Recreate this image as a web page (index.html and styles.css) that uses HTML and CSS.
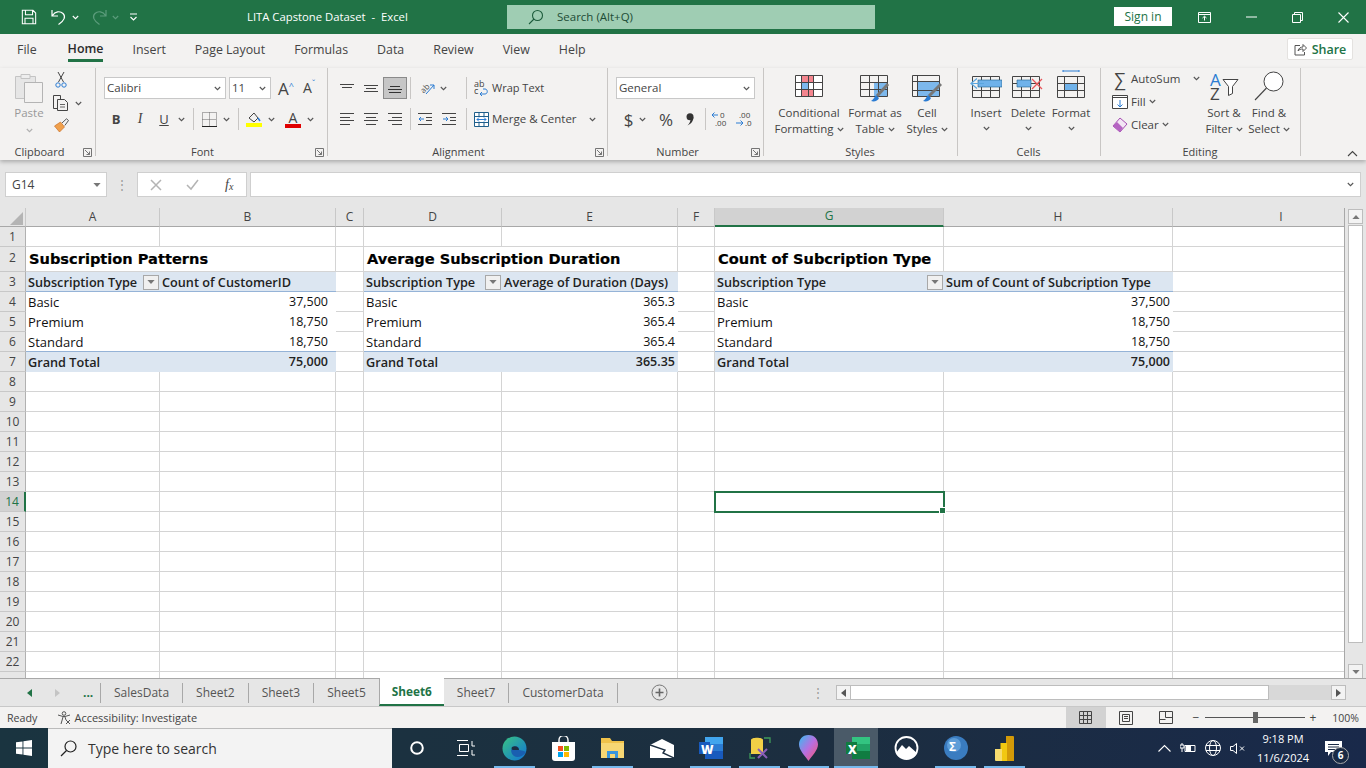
FILE: index.html
```html
<!DOCTYPE html>
<html>

<head>
	<meta charset="UTF-8">
	<title>LITA Capstone Dataset - Excel</title>
	<link rel="stylesheet" href="styles.css">
</head>

<body>
	<svg class="sprite">
		<symbol id="chev" viewBox="0 0 7 5"><path d="M.8 1l2.7 2.7L6.2 1" fill="none" stroke="currentColor" stroke-width="1.1"/></symbol>
		<symbol id="launch" viewBox="0 0 9 9"><path d="M.5.5h8v8h-8z M2 2l4.5 4.5M3.5 6.5h3v-3" fill="none" stroke="#666" stroke-width=".9"/></symbol>
		<symbol id="caret" viewBox="0 0 9 5"><path d="M0 0h9L4.500 5z" fill="currentColor"/></symbol>
	</svg>

	<!-- title bar -->
	<header class="titlebar">
		<div class="qat">
			<svg class="qat-save" width="16" height="16" viewBox="0 0 18 18"><path d="M1.500 1.500h12l3 3v12h-15z M5 1.500v5h8v-5 M4.500 16.500v-6h9v6" fill="none" stroke="#fff" stroke-width="1.200"/></svg>
			<svg class="qat-undo" width="16" height="18" viewBox="0 0 16 18"><path d="M1 2v6h6M1.500 7.500C4 3.500 9 2.500 12 5.500c3 3 1.500 7-4.500 11" fill="none" stroke="#fff" stroke-width="1.200"/></svg>
			<svg class="chev-w"><use href="#chev"/></svg>
			<svg class="qat-redo" width="16" height="18" viewBox="0 0 16 18"><path d="M15 2v6H9M14.500 7.500C12 3.500 7 2.500 4 5.500c-3 3-1.500 7 4.500 11" fill="none" stroke="#5c9c7c" stroke-width="1.200"/></svg>
			<svg class="chev-w faded"><use href="#chev"/></svg>
			<svg class="qat-more" width="9" height="9" viewBox="0 0 9 9"><path d="M1 1h7M1.500 4l3 3 3-3" fill="none" stroke="#fff" stroke-width="1.100"/></svg>
		</div>
		<div class="doc-title">LITA Capstone Dataset &nbsp;-&nbsp; Excel</div>
		<div class="searchbox">
			<svg width="16" height="16" viewBox="0 0 16 16"><circle cx="9.500" cy="6.500" r="5" fill="none" stroke="#1d5c3c" stroke-width="1.100"/><path d="M6 10l-5 5" stroke="#1d5c3c" stroke-width="1.100"/></svg>
			<span>Search (Alt+Q)</span>
		</div>
		<div class="spacer"></div>
		<button class="signin">Sign in</button>
		<div class="winbtn"><svg width="14" height="11" viewBox="0 0 14 11"><path d="M.5.500h12v10H.500zM.5 2.500h12M6.500 8.500V4.500M4.500 6l2-1.800 2 1.800" fill="none" stroke="#fff"/></svg></div>
		<div class="winbtn"><svg width="11" height="2" viewBox="0 0 11 2"><path d="M0 1h11" stroke="#fff"/></svg></div>
		<div class="winbtn"><svg width="11" height="11" viewBox="0 0 11 11"><path d="M.5 2.500h8v8h-8zM2.500 2.500v-2h8v8h-2" fill="none" stroke="#fff"/></svg></div>
		<div class="winbtn"><svg width="11" height="11" viewBox="0 0 11 11"><path d="M.5.500l10 10M10.500.500l-10 10" stroke="#fff" stroke-width="1.100"/></svg></div>
	</header>

	<!-- menu tabs -->
	<nav class="menutabs">
		<span class="menu-file">File</span>
		<span class="menu-on">Home</span>
		<span>Insert</span>
		<span>Page Layout</span>
		<span>Formulas</span>
		<span>Data</span>
		<span>Review</span>
		<span>View</span>
		<span>Help</span>
		<div class="spacer"></div>
		<button class="share">
			<svg width="13" height="13" viewBox="0 0 13 13"><path d="M6 2.500H1v9.500h9.500V9M4 8c.5-3 3-4 5-4V1.500L12.500 5 9 8.500V6C7 6 5 6.500 4 8z" fill="none" stroke="#555"/></svg>
			Share
		</button>
	</nav>

	<!-- ribbon -->
	<section class="ribbon">
		<div class="group g-clip">
			<div class="group-body clip-body">
				<div class="paste">
					<svg width="28" height="31" viewBox="0 0 28 31"><path d="M.5 4.500h20v22H.500z" fill="#e6e6e6" stroke="#c4c4c4"/><path d="M6 2.500h9v4H6z" fill="#eee" stroke="#c4c4c4"/><path d="M9.500 10.500h18v20h-18z" fill="#f3f2f1" stroke="#b4b4b4"/></svg>
					<span class="paste-label">Paste</span>
					<svg class="chev dim"><use href="#chev"/></svg>
				</div>
				<div class="clip-tools">
					<svg class="scissors" width="12" height="16" viewBox="0 0 12 16"><path d="M3 0l5.500 10M9 0L3.500 10" stroke="#444" fill="none"/><circle cx="3" cy="13" r="2.200" fill="none" stroke="#2b7cd3"/><circle cx="9" cy="13" r="2.200" fill="none" stroke="#2b7cd3"/></svg>
					<div class="copy-row">
						<svg width="16" height="16" viewBox="0 0 16 16"><path d="M.5.500h7v13h-7z" fill="none" stroke="#444"/><path d="M4.500 4.500h7l3 3v8h-10z" fill="#f3f2f1" stroke="#444"/><path d="M7 9.500h5M7 12h5" stroke="#666"/></svg>
						<svg class="chev"><use href="#chev"/></svg>
					</div>
					<svg width="17" height="15" viewBox="0 0 16 15"><path d="M1 8l6-4 4 5-5 5z" fill="#f0a04b" stroke="#c8702a" stroke-width=".7"/><path d="M8.500 5L13 .8l2 1.700-3.700 5" fill="none" stroke="#555"/></svg>
				</div>
			</div>
			<div class="group-label">Clipboard<svg class="launch"><use href="#launch"/></svg></div>
		</div>

		<div class="group g-font">
			<div class="group-body">
				<div class="row row-top">
					<div class="combo combo-font"><span>Calibri</span><svg class="chev"><use href="#chev"/></svg></div>
					<div class="combo combo-size"><span>11</span><svg class="chev"><use href="#chev"/></svg></div>
					<span class="grow-a">A<sup>^</sup></span>
					<span class="shrink-a">A<sup>ˇ</sup></span>
				</div>
				<div class="row row-low">
					<span class="btn bold">B</span>
					<span class="btn ital">I</span>
					<span class="btn under">U</span>
					<svg class="chev tight"><use href="#chev"/></svg>
					<i class="vsep"></i>
					<span class="btn"><svg width="15" height="15" viewBox="0 0 15 15"><path d="M.5.500h14v14H.500zM7.500.500v14M.5 7.500h14" fill="none" stroke="#666" stroke-dasharray="1 1"/><path d="M0 14.500h15" stroke="#222"/></svg></span>
					<svg class="chev tight"><use href="#chev"/></svg>
					<i class="vsep"></i>
					<span class="btn"><svg width="16" height="16" viewBox="0 0 16 16"><path d="M3 7l5-5 4 5-4 4z" fill="none" stroke="#444"/><path d="M12 7l2 3" stroke="#2b7cd3" stroke-width="1.500"/><path d="M0 12h16v4H0z" fill="#ffff00"/></svg></span>
					<svg class="chev tight"><use href="#chev"/></svg>
					<span class="btn font-a"><b>A</b></span>
					<svg class="chev tight"><use href="#chev"/></svg>
				</div>
			</div>
			<div class="group-label">Font<svg class="launch"><use href="#launch"/></svg></div>
		</div>

		<div class="group g-align">
			<div class="group-body">
				<div class="row row-top">
					<span class="btn"><svg width="14" height="9" viewBox="0 0 14 9"><path d="M0 .5h14M2 3.500h10" stroke="#444"/></svg></span>
					<span class="btn"><svg width="14" height="9" viewBox="0 0 14 9"><path d="M0 1.500h14M2 4.500h10M0 7.500h14" stroke="#444"/></svg></span>
					<span class="btn btn-on"><svg width="14" height="9" viewBox="0 0 14 9"><path d="M2 2.500h10M0 5.500h14M1 8.500h12" stroke="#333"/></svg></span>
					<i class="vsep"></i>
					<span class="btn"><svg width="16" height="16" viewBox="0 0 16 16"><text x="0" y="11" transform="rotate(-45 5 8)" class="orient-txt">ab</text><path d="M6 14l8-9M10 5h4v4" fill="none" stroke="#2b7cd3"/></svg></span>
					<svg class="chev"><use href="#chev"/></svg>
					<i class="vsep sep-wide"></i>
					<span class="wide-btn wrap-btn"><svg width="15" height="16" viewBox="0 0 15 16"><text x="0" y="7" class="wrap-txt">ab</text><text x="0" y="14" class="wrap-txt">c</text><path d="M9 9h2c3 0 3 5 0 5H6M8 16l-2-2 2-2" fill="none" stroke="#2b7cd3"/></svg><span>Wrap Text</span></span>
				</div>
				<div class="row row-low">
					<span class="btn"><svg width="14" height="12" viewBox="0 0 14 12"><path d="M0 .5h14M0 4.500h10M0 7.500h14M0 11.500h10" stroke="#444"/></svg></span>
					<span class="btn"><svg width="14" height="12" viewBox="0 0 14 12"><path d="M0 .5h14M2 4.500h10M0 7.500h14M2 11.500h10" stroke="#444"/></svg></span>
					<span class="btn"><svg width="14" height="12" viewBox="0 0 14 12"><path d="M0 .5h14M4 4.500h10M0 7.500h14M4 11.500h10" stroke="#444"/></svg></span>
					<i class="vsep sep-low"></i>
					<span class="btn"><svg width="14" height="12" viewBox="0 0 14 12"><path d="M0 .5h14M8 4.500h6M8 7.500h6M0 11.500h14" stroke="#444"/><path d="M1 6h5M3 4L1 6l2 2" fill="none" stroke="#2b7cd3"/></svg></span>
					<span class="btn"><svg width="14" height="12" viewBox="0 0 14 12"><path d="M0 .5h14M8 4.500h6M8 7.500h6M0 11.500h14" stroke="#444"/><path d="M1 6h5M4 4l2 2-2 2" fill="none" stroke="#2b7cd3"/></svg></span>
					<i class="vsep sep-merge"></i>
					<span class="wide-btn"><svg width="15" height="15" viewBox="0 0 15 15"><path d="M.5.500h14v14H.500zM.5 4.500h14M.5 10.500h14M5 .5v4M10 .5v4M5 10.500v4M10 10.500v4" fill="#fff" stroke="#1f5f8b"/><path d="M3 7.500h9M5 5.500l-2 2 2 2M10 5.500l2 2-2 2" fill="none" stroke="#2b7cd3"/></svg><span>Merge &amp; Center</span><svg class="chev merge-chev"><use href="#chev"/></svg></span>
				</div>
			</div>
			<div class="group-label">Alignment<svg class="launch"><use href="#launch"/></svg></div>
		</div>

		<div class="group g-number">
			<div class="group-body">
				<div class="row row-top">
					<div class="combo combo-num"><span>General</span><svg class="chev"><use href="#chev"/></svg></div>
				</div>
				<div class="row row-low num-row">
					<span class="sym-dollar">$</span>
					<svg class="chev tight"><use href="#chev"/></svg>
					<span class="sym-pct">%</span>
					<span class="sym-comma"><svg width="8" height="13" viewBox="0 0 8 13"><circle cx="4" cy="3.800" r="3.500" fill="#333"/><path d="M7.500 4C7.500 8 5 11 1.500 12.500 4 10 4.500 8 4.500 6z" fill="#333"/></svg></span>
					<i class="vsep"></i>
					<span class="dec"><svg width="18" height="18" viewBox="0 0 18 18"><path d="M7 5H1M3.500 2.500L1 5l2.500 2.500" fill="none" stroke="#2b7cd3"/><text x="9" y="8" class="dec-txt">0</text><text x="4" y="16" class="dec-txt">.00</text></svg></span>
					<span class="dec"><svg width="18" height="18" viewBox="0 0 18 18"><text x="4" y="8" class="dec-txt">.00</text><path d="M1 13h7M5.500 10.500L8 13l-2.500 2.500" fill="none" stroke="#2b7cd3"/><text x="10" y="16" class="dec-txt">.0</text></svg></span>
				</div>
			</div>
			<div class="group-label">Number<svg class="launch"><use href="#launch"/></svg></div>
		</div>

		<div class="group g-styles">
			<div class="group-body big-row">
				<div class="big big-cond">
					<svg width="28" height="22" viewBox="0 0 28 22"><path d="M.5.500h27v21H.500z" fill="#fff"/><path d="M6 1h12v7H6zM6 15h12v6H6z" fill="#f4858e"/><path d="M6 8h7v7H6z" fill="#7db8ec"/><path d="M.5.500h27v21H.500zM.5 7.500h27M.5 14.500h27M6.500.500v21M13.500.500v21M18.500.500v21" fill="none" stroke="#444"/></svg>
					<span>Conditional</span><span>Formatting<svg class="chev inline"><use href="#chev"/></svg></span>
				</div>
				<div class="big big-fmt">
					<svg width="30" height="28" viewBox="0 0 30 28"><path d="M14 8h13v13H14z" fill="#7db8ec"/><path d="M.5.500h27v21H.500zM.5 7.500h27M.5 14.500h27M9.500.500v21M18.500.500v21" fill="none" stroke="#444"/><path d="M28 9L17 21" stroke="#777" stroke-width="3"/><path d="M16 20l3 3c-1 3-5 4-8 3 2-1 3-3 5-6z" fill="#2b7cd3"/></svg>
					<span>Format as</span><span>Table<svg class="chev inline"><use href="#chev"/></svg></span>
				</div>
				<div class="big big-cell">
					<svg width="30" height="28" viewBox="0 0 30 28"><path d="M5 7h22v14H5z" fill="#7db8ec"/><path d="M.5.500h27v21H.500zM.5 6.500h27M.5 15.500h27M5.500.500v21" fill="none" stroke="#444"/><path d="M29 9L17 21" stroke="#777" stroke-width="3"/><path d="M16 20l3 3c-1 3-5 4-8 3 2-1 3-3 5-6z" fill="#2b7cd3"/></svg>
					<span>Cell</span><span>Styles<svg class="chev inline"><use href="#chev"/></svg></span>
				</div>
			</div>
			<div class="group-label">Styles</div>
		</div>

		<div class="group g-cells">
			<div class="group-body big-row">
				<div class="big big-ins">
					<svg width="32" height="28" viewBox="0 0 32 28"><path d="M2.500 6.500h27v21h-27zM2.500 13.500h27M2.500 20.500h27M11.500 6.500v21M20.500 6.500v21" fill="none" stroke="#444"/><path d="M8 10h24v7H8z" fill="#6fb2ea" stroke="#1f5f8b" stroke-width=".6"/><path d="M14 13.500H2M7 8.500l-6 5 6 5" fill="#f3f2f1" stroke="#5aa6df" stroke-width="1.200"/></svg>
					<span>Insert</span><svg class="chev"><use href="#chev"/></svg>
				</div>
				<div class="big big-del">
					<svg width="32" height="28" viewBox="0 0 32 28"><path d="M.5 6.500h27v21H.500zM.5 13.500h27M.5 20.500h27M9.500 6.500v21M18.500 6.500v21" fill="none" stroke="#444"/><path d="M5 10h14v7H5z" fill="#6fb2ea" stroke="#1f5f8b" stroke-width=".6"/><path d="M20 9l10 10M30 9L20 19" stroke="#e8555a" stroke-width="1.300"/></svg>
					<span>Delete</span><svg class="chev"><use href="#chev"/></svg>
				</div>
				<div class="big big-format">
					<svg width="28" height="28" viewBox="0 0 28 28"><path d="M6 1h16M6 0v2M22 0v2" stroke="#2b7cd3"/><path d="M.5 6.500h27v21H.500zM.5 13.500h27M.5 20.500h27M7.500 6.500v21M20.500 6.500v21" fill="none" stroke="#444"/><path d="M8 14h12v6H8z" fill="#6fb2ea"/></svg>
					<span>Format</span><svg class="chev"><use href="#chev"/></svg>
				</div>
			</div>
			<div class="group-label">Cells</div>
		</div>

		<div class="group g-edit">
			<div class="group-body edit-body">
				<div class="edit-list">
					<div class="edit-item"><span class="sigma">∑</span>AutoSum<svg class="chev auto-chev"><use href="#chev"/></svg></div>
					<div class="edit-item"><svg width="16" height="14" viewBox="0 0 16 14"><path d="M.5.500h15v13H.500zM.5 2.500h15" fill="#fff" stroke="#444"/><path d="M8 5v7M5.500 9.500L8 12l2.500-2.500" fill="none" stroke="#2b7cd3"/></svg>Fill<svg class="chev inline"><use href="#chev"/></svg></div>
					<div class="edit-item"><svg width="16" height="16" viewBox="0 0 16 16"><path d="M1 9l7-8 7 6-7 8z" fill="#f3e6f5" stroke="#a64db3"/><path d="M1 9l4-4 6 6-3 4z" fill="#b565c2"/></svg>Clear<svg class="chev inline"><use href="#chev"/></svg></div>
				</div>
				<div class="big big-sort">
					<svg width="30" height="31" viewBox="0 0 30 31"><text x="1" y="15" class="az az-a">A</text><text x="1" y="29" class="az">Z</text><path d="M14 8.500h15l-5.500 7v7l-4 2v-9z" fill="#fff" stroke="#444"/></svg>
					<span>Sort &amp;</span><span>Filter<svg class="chev inline"><use href="#chev"/></svg></span>
				</div>
				<div class="big big-find">
					<svg width="30" height="30" viewBox="0 0 30 30"><circle cx="19.500" cy="10.500" r="9.500" fill="#fff" stroke="#444"/><path d="M12.500 17L1 29" stroke="#444" stroke-width="1.100"/></svg>
					<span>Find &amp;</span><span>Select<svg class="chev inline"><use href="#chev"/></svg></span>
				</div>
			</div>
			<div class="group-label">Editing</div>
		</div>

		<div class="collapse-btn"><svg width="11" height="7" viewBox="0 0 11 7"><path d="M1 6l4.500-4.500L10 6" fill="none" stroke="#444" stroke-width="1.100"/></svg></div>
	</section>

	<!-- formula bar -->
	<section class="formulabar">
		<div class="namebox">G14<svg class="caret"><use href="#caret"/></svg></div>
		<div class="fb-dots">⋮</div>
		<div class="fb-btns">
			<svg width="12" height="12" viewBox="0 0 12 12"><path d="M1 1l10 10M11 1L1 11" stroke="#b4b4b4" stroke-width="1.500"/></svg>
			<svg width="13" height="12" viewBox="0 0 13 12"><path d="M1 6l4 4 7-9" fill="none" stroke="#b4b4b4" stroke-width="1.500"/></svg>
			<span class="fx">f<sub>x</sub></span>
		</div>
		<div class="fb-input"><svg class="chev"><use href="#chev"/></svg></div>
	</section>

	<!-- sheet -->
	<main class="sheet">
		<div class="grid-wrap">
		<table class="cells">
			<colgroup>
				<col class="c-rh"><col class="c-a"><col class="c-b"><col class="c-c"><col class="c-d"><col class="c-e"><col class="c-f"><col class="c-g"><col class="c-h"><col class="c-i">
			</colgroup>
			<tr class="colhead">
				<th class="corner"><svg width="13" height="13" viewBox="0 0 13 13"><path d="M13 0v13H0z" fill="#b4b4b4"/></svg></th>
				<th>A</th><th>B</th><th>C</th><th>D</th><th>E</th><th>F</th><th class="col-on">G</th><th>H</th><th>I</th>
			</tr>
			<tr><th>1</th><td></td><td></td><td></td><td></td><td></td><td></td><td></td><td></td><td></td></tr>
			<tr class="tall">
				<th>2</th>
				<td colspan="2" class="title">Subscription Patterns</td><td></td>
				<td colspan="2" class="title">Average Subscription Duration</td><td></td>
				<td class="title">Count of Subcription Type</td><td></td><td></td>
			</tr>
			<tr>
				<th>3</th>
				<td class="pv-head"><div class="pv-flex">Subscription Type<span class="filter"><svg class="caret"><use href="#caret"/></svg></span></div></td>
				<td class="pv-head">Count of CustomerID</td><td class="pv-gap"></td>
				<td class="pv-head"><div class="pv-flex">Subscription Type<span class="filter"><svg class="caret"><use href="#caret"/></svg></span></div></td>
				<td class="pv-head">Average of Duration (Days)</td><td class="pv-gap"></td>
				<td class="pv-head"><div class="pv-flex">Subscription Type<span class="filter"><svg class="caret"><use href="#caret"/></svg></span></div></td>
				<td class="pv-head">Sum of Count of Subcription Type</td><td></td>
			</tr>
			<tr>
				<th>4</th>
				<td class="pv">Basic</td><td class="pv num acct">37,500</td><td></td>
				<td class="pv">Basic</td><td class="pv num">365.3</td><td></td>
				<td class="pv">Basic</td><td class="pv num">37,500</td><td></td>
			</tr>
			<tr>
				<th>5</th>
				<td class="pv">Premium</td><td class="pv num acct">18,750</td><td></td>
				<td class="pv">Premium</td><td class="pv num">365.4</td><td></td>
				<td class="pv">Premium</td><td class="pv num">18,750</td><td></td>
			</tr>
			<tr class="last-body">
				<th>6</th>
				<td class="pv">Standard</td><td class="pv num acct">18,750</td><td></td>
				<td class="pv">Standard</td><td class="pv num">365.4</td><td></td>
				<td class="pv">Standard</td><td class="pv num">18,750</td><td></td>
			</tr>
			<tr>
				<th>7</th>
				<td class="pv-total">Grand Total</td><td class="pv-total num acct">75,000</td><td class="pv-gap"></td>
				<td class="pv-total">Grand Total</td><td class="pv-total num">365.35</td><td class="pv-gap"></td>
				<td class="pv-total">Grand Total</td><td class="pv-total num">75,000</td><td></td>
			</tr>
			<tr><th>8</th><td></td><td></td><td></td><td></td><td></td><td></td><td></td><td></td><td></td></tr>
			<tr><th>9</th><td></td><td></td><td></td><td></td><td></td><td></td><td></td><td></td><td></td></tr>
			<tr><th>10</th><td></td><td></td><td></td><td></td><td></td><td></td><td></td><td></td><td></td></tr>
			<tr><th>11</th><td></td><td></td><td></td><td></td><td></td><td></td><td></td><td></td><td></td></tr>
			<tr><th>12</th><td></td><td></td><td></td><td></td><td></td><td></td><td></td><td></td><td></td></tr>
			<tr><th>13</th><td></td><td></td><td></td><td></td><td></td><td></td><td></td><td></td><td></td></tr>
			<tr><th class="row-on">14</th><td></td><td></td><td></td><td></td><td></td><td></td><td class="selected"></td><td></td><td></td></tr>
			<tr><th>15</th><td></td><td></td><td></td><td></td><td></td><td></td><td></td><td></td><td></td></tr>
			<tr><th>16</th><td></td><td></td><td></td><td></td><td></td><td></td><td></td><td></td><td></td></tr>
			<tr><th>17</th><td></td><td></td><td></td><td></td><td></td><td></td><td></td><td></td><td></td></tr>
			<tr><th>18</th><td></td><td></td><td></td><td></td><td></td><td></td><td></td><td></td><td></td></tr>
			<tr><th>19</th><td></td><td></td><td></td><td></td><td></td><td></td><td></td><td></td><td></td></tr>
			<tr><th>20</th><td></td><td></td><td></td><td></td><td></td><td></td><td></td><td></td><td></td></tr>
			<tr><th>21</th><td></td><td></td><td></td><td></td><td></td><td></td><td></td><td></td><td></td></tr>
			<tr><th>22</th><td></td><td></td><td></td><td></td><td></td><td></td><td></td><td></td><td></td></tr>
			<tr><th></th><td></td><td></td><td></td><td></td><td></td><td></td><td></td><td></td><td></td></tr>
		</table>
		</div>
		<div class="vscroll">
			<span class="sb-btn"><svg class="caret up"><use href="#caret"/></svg></span>
			<span class="sb-thumb"></span>
			<span class="sb-btn"><svg class="caret"><use href="#caret"/></svg></span>
		</div>
	</main>

	<!-- sheet tabs -->
	<section class="sheetbar">
		<div class="tab-nav">
			<svg width="5" height="8" viewBox="0 0 5 8"><path d="M5 0v8L0 4z" fill="#217346"/></svg>
			<svg width="5" height="8" viewBox="0 0 5 8"><path d="M0 0v8l5-4z" fill="#c4c4c4"/></svg>
			<span class="tab-more">...</span>
		</div>
		<span class="tab">SalesData</span>
		<span class="tab">Sheet2</span>
		<span class="tab">Sheet3</span>
		<span class="tab tab-before">Sheet5</span>
		<span class="tab tab-on">Sheet6</span>
		<span class="tab">Sheet7</span>
		<span class="tab">CustomerData</span>
		<svg class="tab-add" width="17" height="17" viewBox="0 0 17 17"><circle cx="8.500" cy="8.500" r="7.500" fill="none" stroke="#777"/><path d="M8.500 4.500v8M4.500 8.500h8" stroke="#666" stroke-width="1.600"/></svg>
		<div class="spacer"></div>
		<span class="hs-dots">⋮</span>
		<div class="hscroll">
			<span class="sb-btn"><svg width="5" height="8" viewBox="0 0 5 8"><path d="M5 0v8L0 4z" fill="#555"/></svg></span>
			<span class="hs-thumb"></span>
			<span class="hs-track"></span>
			<span class="sb-btn"><svg width="5" height="8" viewBox="0 0 5 8"><path d="M0 0v8l5-4z" fill="#555"/></svg></span>
		</div>
	</section>

	<!-- status bar -->
	<footer class="statusbar">
		<span class="st-ready">Ready</span>
		<svg class="st-acc" width="15" height="14" viewBox="0 0 15 14"><circle cx="7" cy="2.500" r="1.800" fill="none" stroke="#555"/><path d="M1 4l5 1.500h2L13 4M6 6l-2 7M8 6l1 3M9 9l4 4M13 9l-4 4" fill="none" stroke="#555"/></svg>
		<span>Accessibility: Investigate</span>
		<div class="spacer"></div>
		<span class="view view-on"><svg width="13" height="13" viewBox="0 0 13 13"><path d="M.5.500h12v12H.500zM4.500.500v12M8.500.500v12M.5 4.500h12M.5 8.500h12" fill="none" stroke="#444"/></svg></span>
		<span class="view"><svg width="14" height="14" viewBox="0 0 14 14"><path d="M.5.500h13v13H.500z" fill="none" stroke="#444"/><path d="M3.500 3.500h7v7h-7zM5 5.500h4M5 7.500h4" fill="none" stroke="#444"/></svg></span>
		<span class="view"><svg width="14" height="13" viewBox="0 0 14 13"><path d="M.5.500h13v12H.500zM6.500.500v6h7M.5 8.500h6" fill="none" stroke="#444"/></svg></span>
		<span class="zoom-minus">−</span>
		<div class="zoom-track"><i class="zoom-thumb"></i></div>
		<span class="zoom-plus">+</span>
		<span class="zoom-pct">100%</span>
	</footer>

	<!-- taskbar -->
	<footer class="taskbar">
		<div class="start"><svg width="16" height="16" viewBox="0 0 16 16"><path d="M0 2.300l6.500-.9v6.200H0zM7.400 1.300L16 0v7.600H7.400zM0 8.400h6.500v6.200L0 13.700zM7.400 8.400H16V16l-8.600-1.200z" fill="#fff"/></svg></div>
		<div class="tb-search">
			<svg width="17" height="17" viewBox="0 0 17 17"><circle cx="10.500" cy="6.500" r="5.500" fill="none" stroke="#222" stroke-width="1.200"/><path d="M6.500 10.500L1 16" stroke="#222" stroke-width="1.300"/></svg>
			<span>Type here to search</span>
		</div>
		<div class="tb-icons">
			<span class="app plain"><svg width="14" height="14" viewBox="0 0 14 14"><circle cx="7" cy="7" r="5.800" fill="none" stroke="#fff" stroke-width="2"/></svg></span>
			<span class="app plain"><svg width="18" height="16" viewBox="0 0 18 16"><path d="M0 .5h11M0 15.500h11M2.500 4.500h9v7h-9zM15 1v5h3M15 10v5h3" fill="none" stroke="#fff"/></svg></span>
			<span class="app run"><svg width="25" height="25" viewBox="0 0 25 25"><defs><linearGradient id="edgeg" x1="0" y1="0" x2="1" y2="1"><stop offset="0" stop-color="#39c481"/><stop offset="1" stop-color="#1173d8"/></linearGradient></defs><circle cx="12.500" cy="12.500" r="12" fill="url(#edgeg)"/><path d="M24 16c-3 5-9 6-12 4-3-2-4-7-1-9 3-2 7 0 6 3 4 1 6 1 7 2z" fill="#1a5fb0"/><path d="M10 11c3-2 7 0 7 3h-6c-1 0-2-2-1-3z" fill="#1c2e40"/></svg></span>
			<span class="app plain"><svg width="23" height="25" viewBox="0 0 23 25"><path d="M7 7V4a4.500 4.500 0 0 1 9 0v3" fill="none" stroke="#fff" stroke-width="1.400"/><path d="M0 6h23v16a3 3 0 0 1-3 3H3a3 3 0 0 1-3-3z" fill="#fff"/><path d="M6 10h5v5H6z" fill="#f25022"/><path d="M12 10h5v5h-5z" fill="#7fba00"/><path d="M6 16h5v5H6z" fill="#00a4ef"/><path d="M12 16h5v5h-5z" fill="#ffb900"/></svg></span>
			<span class="app run"><svg width="23" height="20" viewBox="0 0 23 20"><path d="M0 0h9l2 3h12v17H0z" fill="#f0c24a"/><path d="M0 5h23v15H0z" fill="#f7d774"/><path d="M6 20v-7h11v7h-3v-4H9v4z" fill="#3a96dd"/></svg></span>
			<span class="app plain"><svg width="24" height="19" viewBox="0 0 24 19"><path d="M0 6L12 0l12 6v13H0z" fill="#fff"/><path d="M0 6l15 5-2 3 11 5" fill="none" stroke="#1c2e40" stroke-width="1.400"/></svg></span>
			<span class="app run"><svg class="word" width="24" height="22" viewBox="0 0 24 22"><path d="M6 0h18v7H6z" fill="#41a5ee"/><path d="M6 7h18v7H6z" fill="#2b7cd3"/><path d="M6 14h18v8H6z" fill="#185abd"/><path d="M0 5h11v12H0z" fill="#185abd"/></svg><b>W</b></span>
			<span class="app run"><svg width="22" height="22" viewBox="0 0 22 22"><path d="M2 3c0-3 12-3 12 0v14H2z" fill="#f1cf46"/><path d="M9 12l9 9M18 12l-9 9" stroke="#8a5fb8" stroke-width="2"/><path d="M15 1h6v5M1 16v5h5" fill="none" stroke="#3f9a5a" stroke-width="1.300"/></svg></span>
			<span class="app run"><svg width="19" height="26" viewBox="0 0 19 26"><defs><linearGradient id="pinG" x1="0" y1="0" x2="1" y2="1"><stop offset="0" stop-color="#35bdf0"/><stop offset=".5" stop-color="#b86ee0"/><stop offset="1" stop-color="#f7566a"/></linearGradient></defs><path d="M9.500 0C3 0 0 5 0 9.500 0 15 6 21 9.500 26 13 21 19 15 19 9.500 19 5 16 0 9.500 0z" fill="url(#pinG)"/></svg></span>
			<span class="app run app-on"><svg class="xl" width="24" height="22" viewBox="0 0 24 22"><path d="M6 0h18v7H6z" fill="#33c481"/><path d="M6 7h18v7H6z" fill="#21a366"/><path d="M6 14h18v8H6z" fill="#107c41"/><path d="M0 5h11v12H0z" fill="#107c41"/></svg><b>X</b></span>
			<span class="app plain"><svg width="25" height="24" viewBox="0 0 25 24"><circle cx="12.500" cy="12" r="11" fill="none" stroke="#fff" stroke-width="1.800"/><path d="M2 17l6-8 4 4 3-3 8 7c-2 4-6 6-10 6S4 21 2 17z" fill="#fff"/></svg></span>
			<span class="app run"><svg width="24" height="24" viewBox="0 0 24 24"><circle cx="12" cy="12" r="12" fill="#3a7cc0"/><circle cx="10" cy="9" r="7" fill="#5e9dd8"/><text x="5" y="15" class="sig-txt">Σ</text></svg></span>
			<span class="app run"><svg width="19" height="25" viewBox="0 0 19 25"><path d="M11 0h7a1 1 0 0 1 1 1v24h-8z" fill="#d39a08"/><path d="M5.500 7H12v18H5.500z" fill="#f2c811"/><path d="M0 13h7v12H1a1 1 0 0 1-1-1z" fill="#f7dc6f"/></svg></span>
		</div>
		<div class="spacer"></div>
		<div class="tray">
			<svg width="13" height="8" viewBox="0 0 13 8"><path d="M.5 7.500l6-6 6 6" fill="none" stroke="#fff" stroke-width="1.100"/></svg>
			<svg width="16" height="12" viewBox="0 0 16 12"><path d="M5 3.500h10v6H5z" fill="none" stroke="#fff"/><path d="M6 4h5v5H6z" fill="#fff"/><path d="M0 3h4v3H0zM2 1v2M2 6v4" fill="none" stroke="#fff"/></svg>
			<svg width="16" height="16" viewBox="0 0 16 16"><circle cx="8" cy="8" r="7.500" fill="none" stroke="#fff"/><ellipse cx="8" cy="8" rx="3.500" ry="7.500" fill="none" stroke="#fff"/><path d="M1 5.500h14M1 10.500h14" stroke="#fff"/></svg>
			<svg width="15" height="11" viewBox="0 0 15 11"><path d="M.5 3.500h2.500L6.500.5v10L3 7.500H.5z" fill="none" stroke="#fff"/><path d="M10 3.500l4 4M14 3.500l-4 4" stroke="#fff"/></svg>
		</div>
		<div class="clock"><span>9:18 PM</span><span>11/6/2024</span></div>
		<div class="notif">
			<svg width="17" height="15" viewBox="0 0 17 15"><path d="M0 0h17v11H6l-3 4v-4H0z" fill="#fff"/><path d="M3 3.500h11M3 6h11M3 8.500h7" stroke="#1a2a45"/></svg>
			<span class="badge">6</span>
		</div>
	</footer>
</body>

</html>
```

FILE: styles.css
```css
* {
	margin: 0;
	padding: 0;
	box-sizing: border-box;
}

html,
body {
	width: 1366px;
	height: 768px;
	overflow: hidden;
}

body {
	font-family: "Open Sans", "Noto Sans", sans-serif;
	font-size: 12px;
	color: #444;
	background: #f3f2f1;
	display: flex;
	flex-direction: column;
}

svg {
	flex: none;
	display: block;
}

.sprite {
	position: absolute;
	width: 0;
	height: 0;
}

.spacer {
	flex: 1;
}

/* title bar */
.titlebar {
	height: 34px;
	background: #217346;
	display: flex;
	align-items: center;
	color: #fff;
}

.qat {
	width: 247px;
	display: flex;
	align-items: center;
	padding-left: 21px;
}

.qat-undo {
	margin-left: 14px;
}

.chev-w {
	width: 7px;
	height: 5px;
	margin-left: 5px;
}

.qat-redo {
	margin-left: 12px;
}

.faded {
	color: #5c9c7c;
}

.qat-more {
	margin-left: 10px;
}

.doc-title {
	width: 260px;
	font-size: 11.3px;
	padding-bottom: 2px;
}

.searchbox {
	width: 368px;
	height: 24px;
	background: #9fcdb3;
	color: #1d4c35;
	display: flex;
	align-items: center;
	gap: 13px;
	padding-left: 21px;
	font-size: 11.5px;
}

.searchbox span {
	padding-bottom: 1px;
}

.signin {
	width: 58px;
	height: 19px;
	border: 0;
	background: #fff;
	color: #217346;
	font: 12px "Open Sans", sans-serif;
	margin: -1px 10px 0 0;
}

.winbtn {
	width: 46px;
	height: 34px;
	display: flex;
	align-items: center;
	justify-content: center;
}

/* menu tabs */
.menutabs {
	height: 34px;
	display: flex;
	align-items: center;
	gap: 29px;
	padding: 0 13px 4px 17px;
	font-size: 12.4px;
}

.menu-file {
	margin-right: 2px;
}

.menu-on {
	color: #2b2b2b;
	font-weight: 600;
	height: 26px;
	line-height: 26px;
	border-bottom: 3px solid #217346;
}

.share {
	width: 66px;
	height: 22px;
	border: 1px solid #e4e2e0;
	border-radius: 2px;
	background: #fff;
	color: #217346;
	font: 600 12.5px "Open Sans", sans-serif;
	display: flex;
	align-items: center;
	justify-content: center;
	gap: 5px;
}

/* ribbon */
.ribbon {
	height: 92px;
	display: flex;
	box-shadow: 0 2px 4px rgba(0, 0, 0, .25);
	position: relative;
	z-index: 2;
	font-size: 11.5px;
}

.group {
	height: 88px;
	display: flex;
	flex-direction: column;
	border-right: 1px solid #c8c6c4;
}

.g-clip {
	width: 96px;
}

.g-font {
	width: 232px;
	padding-left: 8px;
}

.g-align {
	width: 280px;
	padding-left: 7px;
}

.g-number {
	width: 156px;
	padding-left: 8px;
}

.g-styles {
	width: 194px;
}

.g-cells {
	width: 143px;
}

.g-edit {
	width: 200px;
}

.group-body {
	height: 74px;
	flex: none;
	padding-top: 9px;
}

.group-label {
	height: 14px;
	line-height: 20px;
	text-align: center;
	position: relative;
	font-size: 11px;
	padding-right: 1px;
}

.g-clip .group-label {
	padding-right: 16px;
}

.g-font .group-label {
	padding-right: 26px;
}

.g-align .group-label {
	padding-right: 25px;
}

.g-number .group-label {
	padding-right: 24px;
}

.launch {
	width: 9px;
	height: 9px;
	position: absolute;
	right: 3px;
	top: 6px;
}

.row {
	display: flex;
	align-items: center;
}

.row-top {
	height: 22px;
}

.row-low {
	height: 22px;
	margin-top: 9px;
}

.btn {
	width: 24px;
	height: 22px;
	display: flex;
	align-items: center;
	justify-content: center;
	font-size: 13px;
}

.btn-on {
	background: #c6c6c6;
	border: 1px solid #8a8a8a;
}

.chev {
	width: 7px;
	height: 5px;
	color: #555;
}

.chev.dim {
	color: #b0b0b0;
}

.chev.tight {
	margin-left: 2px;
}

.chev.inline {
	display: inline-block;
	margin-left: 3px;
	vertical-align: middle;
}

.vsep {
	width: 1px;
	height: 22px;
	background: #c8c6c4;
	margin: 0 3px 0 8px;
}

.g-align .vsep {
	margin: 0 5px 0 3px;
}

.g-align .vsep.sep-wide {
	margin: 0 7px 0 19px;
}

.g-align .vsep.sep-low {
	margin: 0 2px 0 3px;
}

.g-align .vsep.sep-merge {
	margin: 0 7px 0 5px;
}

/* clipboard */
.clip-body {
	display: flex;
	padding-top: 4px;
}

.paste {
	width: 58px;
	flex: none;
	display: flex;
	flex-direction: column;
	align-items: center;
	color: #999;
}

.paste-label {
	margin: 2px 0 8px;
}

.clip-tools {
	display: flex;
	flex-direction: column;
	gap: 7px;
	margin-left: -5px;
}

.scissors {
	margin-left: 2px;
}

.copy-row {
	display: flex;
	align-items: center;
	gap: 6px;
}

/* font */
.combo {
	height: 22px;
	background: #fff;
	border: 1px solid #c8c8c8;
	display: flex;
	align-items: center;
	justify-content: space-between;
	padding: 0 4px 0 2px;
	font-size: 11.5px;
}

.combo span {
	padding-bottom: 2px;
}

.combo-font {
	width: 122px;
}

.combo-size {
	width: 42px;
	margin-left: 3px;
}

.combo-num {
	width: 139px;
}

.grow-a,
.shrink-a {
	margin-left: 7px;
	font-size: 17px;
	line-height: 1;
	width: 22px;
}

.shrink-a {
	margin-left: 3px;
	font-size: 14px;
}

.grow-a sup,
.shrink-a sup {
	font-size: 9px;
	color: #2b7cd3;
	vertical-align: 6px;
	line-height: 0;
}

.bold {
	font-weight: 700;
}

.ital {
	font-style: italic;
	font-family: "Liberation Serif", serif;
	font-size: 14px;
}

.under {
	text-decoration: underline;
}

.font-a {
	margin-left: 6px;
}

.font-a b {
	font-weight: 400;
	font-size: 14px;
	line-height: 13px;
	width: 16px;
	text-align: center;
	border-bottom: 4px solid #e00000;
}

/* alignment */
.orient-txt {
	font-size: 8px;
	fill: #555;
}

.wrap-txt {
	font-size: 9px;
	fill: #444;
}

.wide-btn {
	display: flex;
	align-items: center;
	gap: 3px;
	font-size: 11.5px;
}

.wide-btn > span {
	padding-bottom: 2px;
}

.wrap-btn {
	font-size: 11px;
}

.merge-chev {
	margin-left: 9px;
}

/* number */
.num-row {
	padding-left: 4px;
}

.sym-dollar {
	font-size: 17px;
	width: 17px;
	text-align: center;
}

.sym-pct {
	font-size: 17px;
	margin-left: 8px;
	width: 24px;
	text-align: center;
}

.sym-comma {
	width: 24px;
	display: flex;
	justify-content: center;
}

.g-number .vsep {
	margin: 0 2px 0 3px;
}

.dec {
	width: 24px;
	display: flex;
	justify-content: center;
}

.dec-txt {
	font-size: 8px;
	fill: #444;
}

/* big buttons */
.big-row {
	display: flex;
	padding-top: 0;
}

.big {
	display: flex;
	flex-direction: column;
	align-items: center;
	line-height: 16px;
	white-space: nowrap;
}

.big-cond {
	margin-left: 10px;
	width: 70px;
	padding-top: 7px;
}

.big-cond > svg:first-child {
	margin-bottom: 8px;
}

.big-fmt {
	width: 62px;
	padding-top: 7px;
}

.big-fmt > svg:first-child,
.big-cell > svg:first-child {
	margin-bottom: 2px;
}

.big-cell {
	width: 40px;
	margin-left: 1px;
	padding-top: 7px;
}

.big-ins,
.big-del,
.big-format {
	padding-top: 2px;
}

.big-ins > svg:first-child,
.big-del > svg:first-child,
.big-format > svg:first-child {
	margin-bottom: 7px;
}

.big-ins {
	width: 44px;
	margin-left: 6px;
}

.big-del {
	width: 40px;
}

.big-format {
	width: 46px;
}

.big-ins .chev,
.big-del .chev,
.big-format .chev {
	margin-top: 5px;
}

/* editing */
.edit-body {
	display: flex;
	padding-top: 0;
}

.edit-list {
	width: 100px;
	padding: 2px 0 0 11px;
	display: flex;
	flex-direction: column;
	gap: 6px;
}

.edit-item {
	height: 17px;
	display: flex;
	align-items: center;
	gap: 3px;
}

.edit-item .chev.inline {
	margin-left: 0;
}

.sigma {
	width: 16px;
	font-size: 18px;
	line-height: 1;
	text-align: center;
}

.auto-chev {
	margin-left: 10px;
}

.big-sort {
	width: 46px;
	padding-top: 3px;
}

.big-sort > svg:first-child {
	margin-bottom: 3px;
}

.big-find {
	width: 44px;
	padding-top: 3px;
}

.big-find > svg:first-child {
	margin-bottom: 4px;
}

.az {
	font-size: 17px;
	fill: #444;
}

.az-a {
	fill: #2b7cd3;
}

.collapse-btn {
	flex: 1;
	display: flex;
	justify-content: flex-end;
	align-items: flex-end;
	padding: 0 8px 3px 0;
}

/* formula bar */
.formulabar {
	height: 48px;
	background: #e6e6e6;
	display: flex;
	padding: 12px 5px 11px;
	font-size: 12px;
}

.namebox {
	width: 102px;
	background: #fff;
	border: 1px solid #cfcfcf;
	display: flex;
	align-items: center;
	justify-content: space-between;
	padding: 0 5px 0 6px;
}

.caret {
	width: 8px;
	height: 4px;
	color: #777;
}

.fb-dots {
	width: 30px;
	text-align: center;
	line-height: 25px;
	color: #999;
}

.fb-btns {
	width: 110px;
	background: #fff;
	border: 1px solid #cfcfcf;
	display: flex;
	align-items: center;
	gap: 24px;
	padding-left: 12px;
}

.fx {
	font-family: "Liberation Serif", serif;
	font-style: italic;
	font-size: 14px;
	color: #444;
	margin-left: 2px;
}

.fx sub {
	font-size: 10px;
	vertical-align: -1px;
}

.fb-input {
	flex: 1;
	margin-left: 3px;
	background: #fff;
	border: 1px solid #cfcfcf;
	display: flex;
	align-items: center;
	justify-content: flex-end;
	padding-right: 6px;
}

/* sheet */
.sheet {
	height: 470px;
	background: #fff;
	display: flex;
	overflow: hidden;
}

.grid-wrap {
	width: 1344px;
	flex: none;
	overflow: hidden;
}

.cells {
	width: 1390px;
	table-layout: fixed;
	border-collapse: separate;
	border-spacing: 0;
	font-size: 13px;
	color: #111;
}

.c-rh { width: 26px; }
.c-a { width: 134px; }
.c-b { width: 176px; }
.c-c { width: 28px; }
.c-d { width: 138px; }
.c-e { width: 176px; }
.c-f { width: 37px; }
.c-g { width: 229px; }
.c-h { width: 229px; }
.c-i { width: 217px; }

.cells tr {
	height: 20px;
}

.cells tr.tall {
	height: 25px;
}

.cells tr.colhead {
	height: 19px;
}

.cells th {
	background: #e6e6e6;
	border-right: 1px solid #b1b1b1;
	border-bottom: 1px solid #c8c8c8;
	font-weight: 400;
	color: #444;
	font-size: 12px;
	line-height: 14px;
	text-align: center;
	vertical-align: top;
	padding: 3px 0 0;
}

.tall th {
	padding: 4px 0 0;
}

.colhead th {
	border-right: 1px solid #c8c8c8;
	border-bottom: 1px solid #a8a8a8;
	vertical-align: middle;
	padding: 0 0 1px;
}

.corner svg {
	margin: 3px 0 0 10px;
}

.colhead th.col-on {
	background: #d2d2d2;
	color: #217346;
	border-bottom: 2px solid #217346;
}

.cells th.row-on {
	background: #d2d2d2;
	color: #217346;
	border-right: 2px solid #217346;
}

.cells td {
	border-right: 1px solid #d4d4d4;
	border-bottom: 1px solid #d4d4d4;
	padding: 0 2px;
	white-space: nowrap;
	line-height: 1;
}

.cells td:empty {
	font-size: 0;
}

.cells td.title {
	font-family: "DejaVu Sans", sans-serif;
	font-weight: 700;
	font-size: 14.6px;
	-webkit-text-stroke: .2px #000;
	color: #000;
	padding: 0 3px;
}

.cells td.pv-head {
	background: #dce6f1;
	font-size: 12.7px;
	font-weight: 600;
	border-right: 0;
	border-bottom: 1px solid #95b3d7;
	color: #222;
	padding-top: 1px;
}

.cells td.pv-gap {
	background: #fff;
}

.pv-flex {
	display: flex;
	align-items: center;
	justify-content: space-between;
	margin-right: -1px;
}

.filter {
	width: 16px;
	height: 15px;
	background: #f0f0f0;
	border: 1px solid #a8a8a8;
	display: flex;
	align-items: center;
	justify-content: center;
}

.cells td.pv {
	border-right: 0;
	border-bottom: 0;
}

.cells .last-body td.pv {
	border-bottom: 1px solid #95b3d7;
	padding-top: 1px;
}

.cells td.pv-total {
	background: #dce6f1;
	font-size: 12.7px;
	font-weight: 600;
	border-right: 0;
	border-bottom: 0;
	color: #222;
}

.cells td.num {
	text-align: right;
	font-size: 12.5px;
	padding-right: 3px;
}

.cells td.pv-total.num {
	font-size: 12.5px;
}

.cells td.acct {
	padding-right: 8px;
}

.cells td.selected {
	position: relative;
	outline: 2px solid #217346;
	outline-offset: -1px;
}

.selected::after {
	content: "";
	position: absolute;
	right: -3px;
	bottom: -3px;
	width: 5px;
	height: 5px;
	background: #217346;
	border: 1px solid #fff;
}

.vscroll {
	flex: 1;
	background: #e6e6e6;
	border-left: 1px solid #a8a8a8;
	display: flex;
	flex-direction: column;
	align-items: center;
	padding: 1px 2px 0 2px;
}

.sb-btn {
	width: 15px;
	height: 15px;
	flex: none;
	background: #f3f3f3;
	border: 1px solid #bdbdbd;
	display: flex;
	align-items: center;
	justify-content: center;
}

.up {
	transform: rotate(180deg);
}

.sb-thumb {
	width: 15px;
	height: 418px;
	flex: none;
	margin: 1px 0 21px;
	background: #fff;
	border: 1px solid #bdbdbd;
}

/* sheet tabs */
.sheetbar {
	height: 29px;
	background: #e6e6e6;
	border-top: 1px solid #a8a8a8;
	border-bottom: 1px solid #c8c8c8;
	display: flex;
	align-items: center;
	font-size: 12px;
	color: #555;
}

.tab-nav {
	width: 101px;
	height: 20px;
	padding-left: 27px;
	display: flex;
	align-items: center;
	gap: 23px;
	border-right: 1px solid #a8a8a8;
}

.tab-more {
	color: #217346;
	font-weight: 700;
}

.tab {
	height: 20px;
	line-height: 19px;
	padding: 0 13px;
	border-right: 1px solid #a8a8a8;
}

.tab-before {
	border-right: 0;
}

.tab-on {
	height: 28px;
	line-height: 27px;
	margin-top: -1px;
	background: #fff;
	color: #217346;
	font-weight: 700;
	font-size: 11.8px;
	border-right: 0;
	border-left: 1px solid #a8a8a8;
	border-bottom: 2px solid #217346;
	padding: 0 12px;
}

.tab-add {
	margin-left: 33px;
}

.hs-dots {
	color: #999;
	margin-right: 12px;
}

.hscroll {
	width: 510px;
	height: 15px;
	margin-right: 20px;
	display: flex;
	background: #d8d8d8;
}

.hs-thumb {
	width: 418px;
	background: #fff;
	border: 1px solid #bdbdbd;
	border-left: 0;
}

.hs-track {
	flex: 1;
}

/* status bar */
.statusbar {
	height: 21px;
	display: flex;
	align-items: center;
	font-size: 11px;
	color: #444;
	padding-right: 7px;
}

.st-ready {
	margin-left: 7px;
	font-size: 10.7px;
}

.st-acc {
	margin: 0 2px 0 20px;
}

.view {
	width: 40px;
	height: 21px;
	display: flex;
	align-items: center;
	justify-content: center;
}

.view-on {
	background: #d2d2d2;
}

.zoom-minus {
	margin-left: 7px;
	font-size: 12px;
}

.zoom-track {
	width: 100px;
	height: 1px;
	background: #555;
	margin: 0 4px 0 6px;
	display: flex;
	justify-content: center;
	align-items: center;
}

.zoom-thumb {
	width: 5px;
	height: 11px;
	flex: none;
	background: #666;
}

.zoom-plus {
	font-size: 12px;
}

.zoom-pct {
	margin-left: 16px;
	font-size: 10.5px;
}

/* taskbar */
.taskbar {
	height: 40px;
	background: linear-gradient(90deg, #1a3440, #1c2e40 60%, #19294a);
	display: flex;
	align-items: center;
	color: #fff;
}

.start {
	width: 48px;
	display: flex;
	justify-content: center;
}

.tb-search {
	width: 344px;
	height: 40px;
	background: #f3f3f3;
	border-top: 1px solid #bbb;
	color: #333;
	display: flex;
	align-items: center;
	gap: 11px;
	padding-left: 12px;
	font-size: 14px;
}

.tb-icons {
	display: flex;
	height: 40px;
}

.app {
	width: 49px;
	height: 40px;
	display: flex;
	align-items: center;
	justify-content: center;
	position: relative;
	font-weight: 700;
	font-size: 12px;
}

.app.run::after {
	content: "";
	position: absolute;
	left: 4px;
	right: 4px;
	bottom: 0;
	height: 2px;
	background: #76b9ed;
}

.app-on {
	background: linear-gradient(#4a5a68, #4a5a68) no-repeat 1px 0 / 44px 100%;
}

.app.app-on::after {
	left: 1px;
	right: 4px;
}

.app b {
	position: absolute;
	left: 15px;
	top: 13px;
	color: #fff;
}

.sig-txt {
	font-size: 12px;
	fill: #fff;
}

.tray {
	display: flex;
	align-items: center;
	gap: 9px;
}

.clock {
	width: 70px;
	margin-left: 3px;
	display: flex;
	flex-direction: column;
	align-items: center;
	font-size: 11px;
	line-height: 19px;
}

.notif {
	width: 48px;
	height: 40px;
	position: relative;
	display: flex;
	justify-content: center;
	align-items: center;
	padding-right: 18px;
}

.badge {
	position: absolute;
	left: 14px;
	top: 19px;
	width: 17px;
	height: 17px;
	border: 1px solid #aaa;
	border-radius: 50%;
	background: #1a2a45;
	font-size: 10px;
	font-weight: 700;
	line-height: 15px;
	text-align: center;
}
```
